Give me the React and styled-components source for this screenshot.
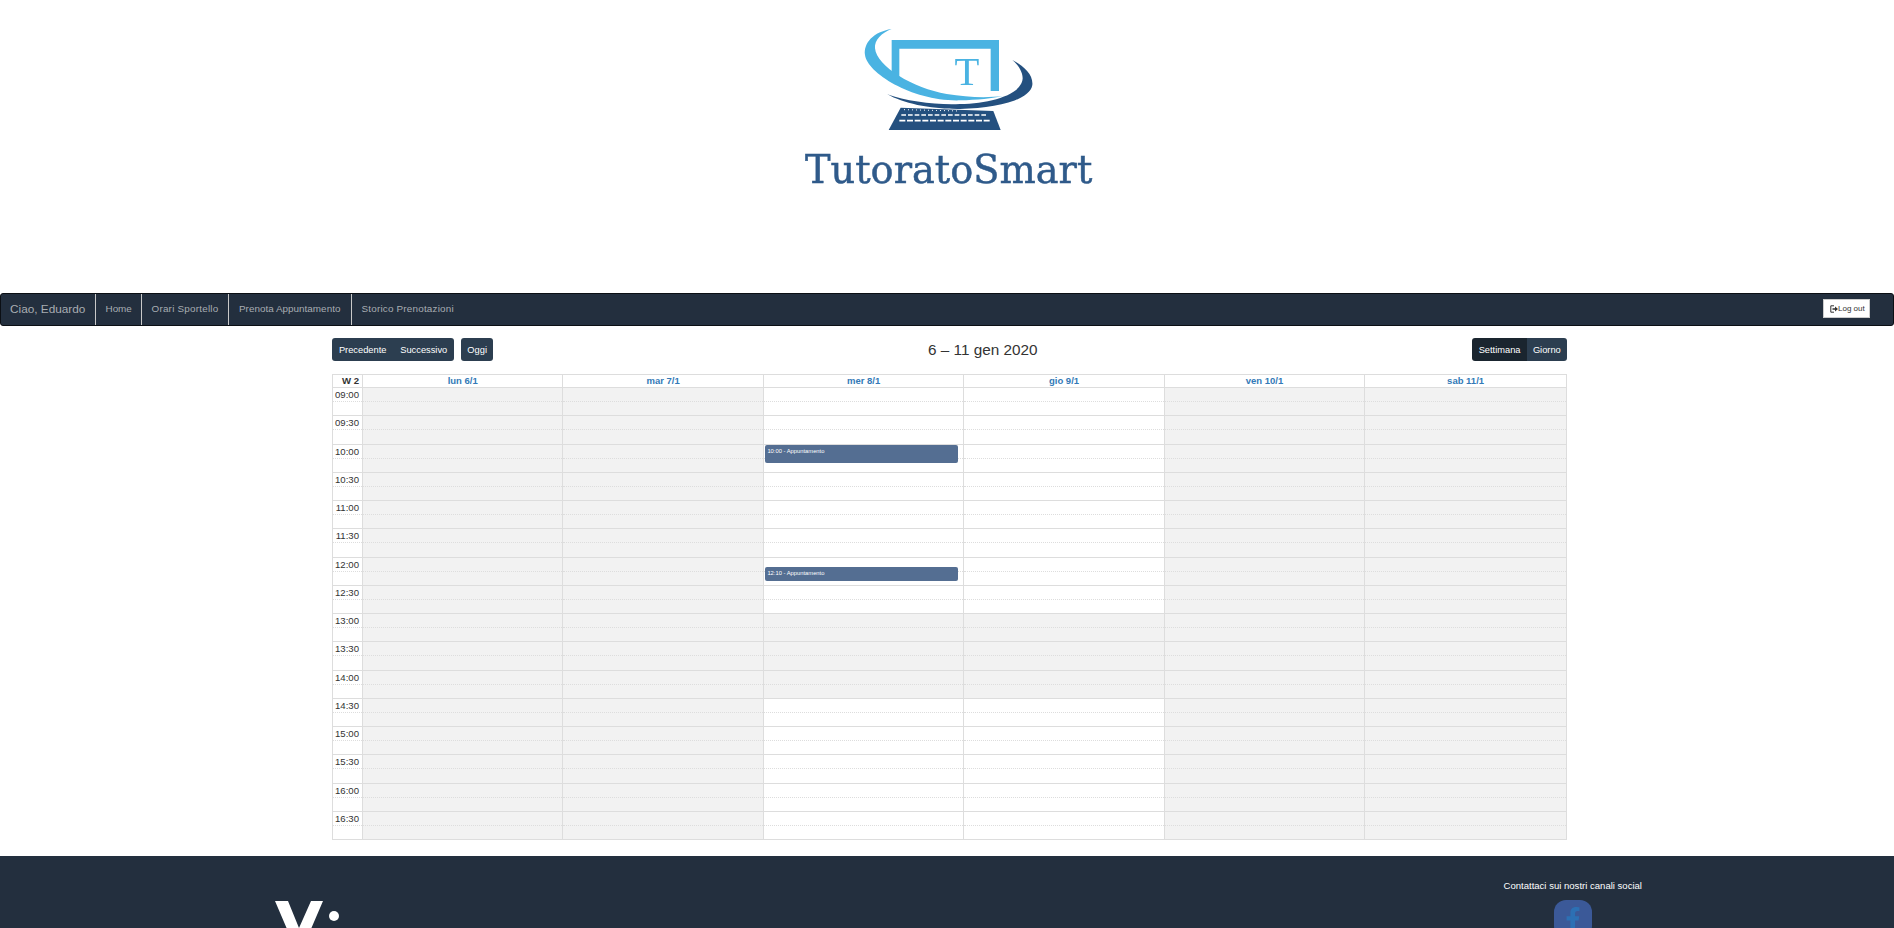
import React from "react";
import styled, { createGlobalStyle } from "styled-components";
import { FaFacebookF } from "react-icons/fa";

const Global = createGlobalStyle`
  html, body { margin: 0; padding: 0; height: 928px; overflow: hidden; background: #fff; }
  body { font-family: "Liberation Sans", Arial, sans-serif; color: #333; }
  * { box-sizing: border-box; }
`;

const Page = styled.div`display: flex; flex-direction: column;`;
const Masthead = styled.header`height: 293px; padding-top: 10px; display: flex; justify-content: center; align-items: flex-start;`;
const LogoSvg = styled.svg`width: 340px; height: 190px; display: block; filter: blur(0.35px);`;

const Nav = styled.nav`
  height: 33px; display: flex; align-items: stretch; background: #232f3e;
  border: 1px solid #0b0f14; border-radius: 3px;
`;
const Brand = styled.a`
  width: 95px; padding: 0 0 2px 9px; display: flex; align-items: center;
  font-size: 11.8px; color: #a8adb2; border-right: 1px solid #c8c8c8;
`;
const NavItem = styled.a`
  width: ${p => p.$w}px; padding: 0 0 2px ${p => p.$pl || 9.5}px; display: flex; align-items: center; white-space: nowrap;
  font-size: 9.9px; letter-spacing: ${p => p.$ls || 0}px; color: #a8adb2;
  border-right: ${p => (p.$last ? "none" : "1px solid #c8c8c8")};
`;
const LogoutButton = styled.button`
  margin: 5px 23px 0 auto; width: 47px; height: 19px; padding: 0 0 0 6px;
  display: flex; align-items: center; background: #fff; border: 1px solid #ccc;
  font: 8px "Liberation Sans", Arial, sans-serif; color: #333; white-space: nowrap;
`;

const Main = styled.main`margin: 12px 0 16px 332px; width: 1235px;`;
const Toolbar = styled.div`height: 23px; margin-bottom: 13px; display: flex; justify-content: space-between; align-items: center;`;
const ToolGroup = styled.div`display: flex; gap: 7px;`;
const ButtonGroup = styled.div`display: flex; border-radius: 3px; overflow: hidden;`;
const CalButton = styled.button`
  height: 23px; padding: 0 ${p => (p.$tight ? 6.2 : 6.9)}px; border: none; color: #fff; white-space: nowrap;
  background: ${p => (p.$active ? "#1a252f" : "#2c3e50")};
  font: 9.3px "Liberation Sans", Arial, sans-serif;
`;
const Title = styled.h2`margin: 0; font-size: 15.3px; font-weight: 400; color: #333;`;

const gridColumns = "29px repeat(5, 200.45px) 1fr";
const Calendar = styled.div`border: 1px solid #ddd; width: 1235px;`;
const HeadRow = styled.div`display: grid; grid-template-columns: ${gridColumns}; height: 13px; border-bottom: 1px solid #ddd;`;
const WeekCell = styled.div`font-size: 9.6px; font-weight: 700; text-align: right; padding-right: 3px; line-height: 12px;`;
const DayHead = styled.div`font-size: 9.5px; font-weight: 700; color: #337ab7; text-align: center; line-height: 12px; border-left: 1px solid #ddd;`;
const SlotRow = styled.div`
  display: grid; grid-template-columns: ${gridColumns}; height: ${p => (p.$first ? 27.25 : 28.25)}px;
  border-top: ${p => (p.$first ? "none" : "1px solid #ddd")};
`;
const Axis = styled.div`display: flex; flex-direction: column; font-size: 9.6px; text-align: right;`;
const AxisTime = styled.div`flex: 1; line-height: 13px; border-bottom: 1px dotted #ddd; padding-right: 3px;`;
const AxisRest = styled.div`flex: 1;`;
const DayCell = styled.div`
  position: relative; border-left: 1px solid #ddd; display: flex; flex-direction: column;
  background: ${p => (p.$off ? "#f2f2f2" : "#fff")};
`;
const HalfSlot = styled.div`flex: 1; border-bottom: ${p => (p.$mid ? "1px dotted #ddd" : "none")};`;
const Event = styled.div`
  position: absolute; z-index: 1; left: 1px; right: 5.5px; top: ${p => p.$top}px; height: ${p => p.$h}px;
  background: #546e92; border-radius: 2px; color: #fff; font-size: 5.8px; line-height: 12px; padding-left: 2.5px; white-space: nowrap;
`;

const Footer = styled.footer`
  height: 240px; background: #232f3e; display: flex; justify-content: space-between; align-items: flex-start;
  padding: 24px 252px 0 275px;
`;
const FooterLogo = styled.svg`width: 70px; height: 80px; margin-top: 21px; display: block;`;
const Contact = styled.div`display: flex; flex-direction: column; align-items: center; gap: 8px;`;
const ContactText = styled.div`color: #fff; font-size: 9.55px; line-height: 12px; white-space: nowrap;`;
const Social = styled.a`
  width: 38px; height: 38px; border-radius: 12px; background: #3b5998; color: #2c70b4;
  display: flex; align-items: center; justify-content: center; font-size: 24px;
`;

const days = ["lun 6/1", "mar 7/1", "mer 8/1", "gio 9/1", "ven 10/1", "sab 11/1"];
const times = ["09:00","09:30","10:00","10:30","11:00","11:30","12:00","12:30","13:00","13:30","14:00","14:30","15:00","15:30","16:00","16:30"];
const isOff = (d, r) => d !== 2 && d !== 3 ? true : r >= 8 && r <= 10;
const events = { "2-2": { top: 0.5, h: 18, t: "10:00 - Appuntamento" }, "2-6": { top: 9.5, h: 14, t: "12:10 - Appuntamento" } };

const Logo = () => (
  <LogoSvg viewBox="-9 0 1020 570" aria-label="TutoratoSmart">
    <path fill="#4ab3e2" d="M335 90H657V243H632V116H358V207L335 186Z" />
    <path fill="#4ab3e2" d="M335 57C280 65 250 100 255 135C262 190 400 275 540 271C590 270 640 265 670 258C620 264 560 262 500 252C400 235 290 170 285 115C283 90 305 68 335 57Z" />
    <path fill="#24507f" d="M697 150C735 170 760 195 757 225C750 270 650 295 540 297C450 298 370 280 322 253C380 275 470 285 540 282C630 280 725 255 728 205C728 185 715 165 697 150Z" />
    <path fill="#24507f" d="M362 293L640 303L662 360H326Z" />
    <path stroke="#fff" strokeWidth="5" strokeDasharray="14 6" d="M364 315H624" />
    <path stroke="#fff" strokeWidth="5" strokeDasharray="18 5" d="M358 332H630" />
    <path stroke="#fff" strokeWidth="3" strokeDasharray="3 9" d="M372 299L540 303" />
    <text x="561" y="225" textAnchor="middle" fontFamily="'Liberation Serif', serif" fontSize="122" fill="#4ab3e2">T</text>
    <text x="75" y="518" fontFamily="'DejaVu Serif', serif" fontSize="116" fill="#2f5a8a" stroke="#2f5a8a" strokeWidth="1.5" textLength="862" lengthAdjust="spacingAndGlyphs">TutoratoSmart</text>
  </LogoSvg>
);

export default function App() {
  return (
    <Page>
      <Global />
      <Masthead><Logo /></Masthead>
      <Nav>
        <Brand>Ciao, Eduardo</Brand>
        <NavItem $w={46}>Home</NavItem>
        <NavItem $w={87} $ls={0.22}>Orari Sportello</NavItem>
        <NavItem $w={123} $pl={10} $ls={0.02}>Prenota Appuntamento</NavItem>
        <NavItem $w={120} $last $ls={0.2}>Storico Prenotazioni</NavItem>
        <LogoutButton>
          <svg width="8" height="8" viewBox="0 0 8 8"><path fill="none" stroke="#333" d="M4 .8H.8V7.2H4" /><path fill="#333" d="M2.5 3.2H5V1.6L8 4 5 6.4V4.8H2.5Z" /></svg>
          Log out
        </LogoutButton>
      </Nav>
      <Main>
        <Toolbar>
          <ToolGroup>
            <ButtonGroup><CalButton>Precedente</CalButton><CalButton>Successivo</CalButton></ButtonGroup>
            <ButtonGroup><CalButton $tight>Oggi</CalButton></ButtonGroup>
          </ToolGroup>
          <Title>6 – 11 gen 2020</Title>
          <ButtonGroup><CalButton $active $tight>Settimana</CalButton><CalButton $tight>Giorno</CalButton></ButtonGroup>
        </Toolbar>
        <Calendar>
          <HeadRow>
            <WeekCell>W 2</WeekCell>
            {days.map(d => <DayHead key={d}>{d}</DayHead>)}
          </HeadRow>
          {times.map((t, r) => (
            <SlotRow key={t} $first={r === 0}>
              <Axis><AxisTime>{t}</AxisTime><AxisRest /></Axis>
              {days.map((d, i) => {
                const ev = events[`${i}-${r}`];
                return (
                  <DayCell key={d} $off={isOff(i, r)}>
                    <HalfSlot $mid /><HalfSlot />
                    {ev && <Event $top={ev.top} $h={ev.h}>{ev.t}</Event>}
                  </DayCell>
                );
              })}
            </SlotRow>
          ))}
        </Calendar>
      </Main>
      <Footer>
        <FooterLogo viewBox="0 0 70 80">
          <path fill="#fff" d="M0 0H13L24 27 36 0H48L30 42H18Z" />
          <circle cx="59" cy="15" r="5" fill="#fff" />
        </FooterLogo>
        <Contact>
          <ContactText>Contattaci sui nostri canali social</ContactText>
          <Social><FaFacebookF /></Social>
        </Contact>
      </Footer>
    </Page>
  );
}
